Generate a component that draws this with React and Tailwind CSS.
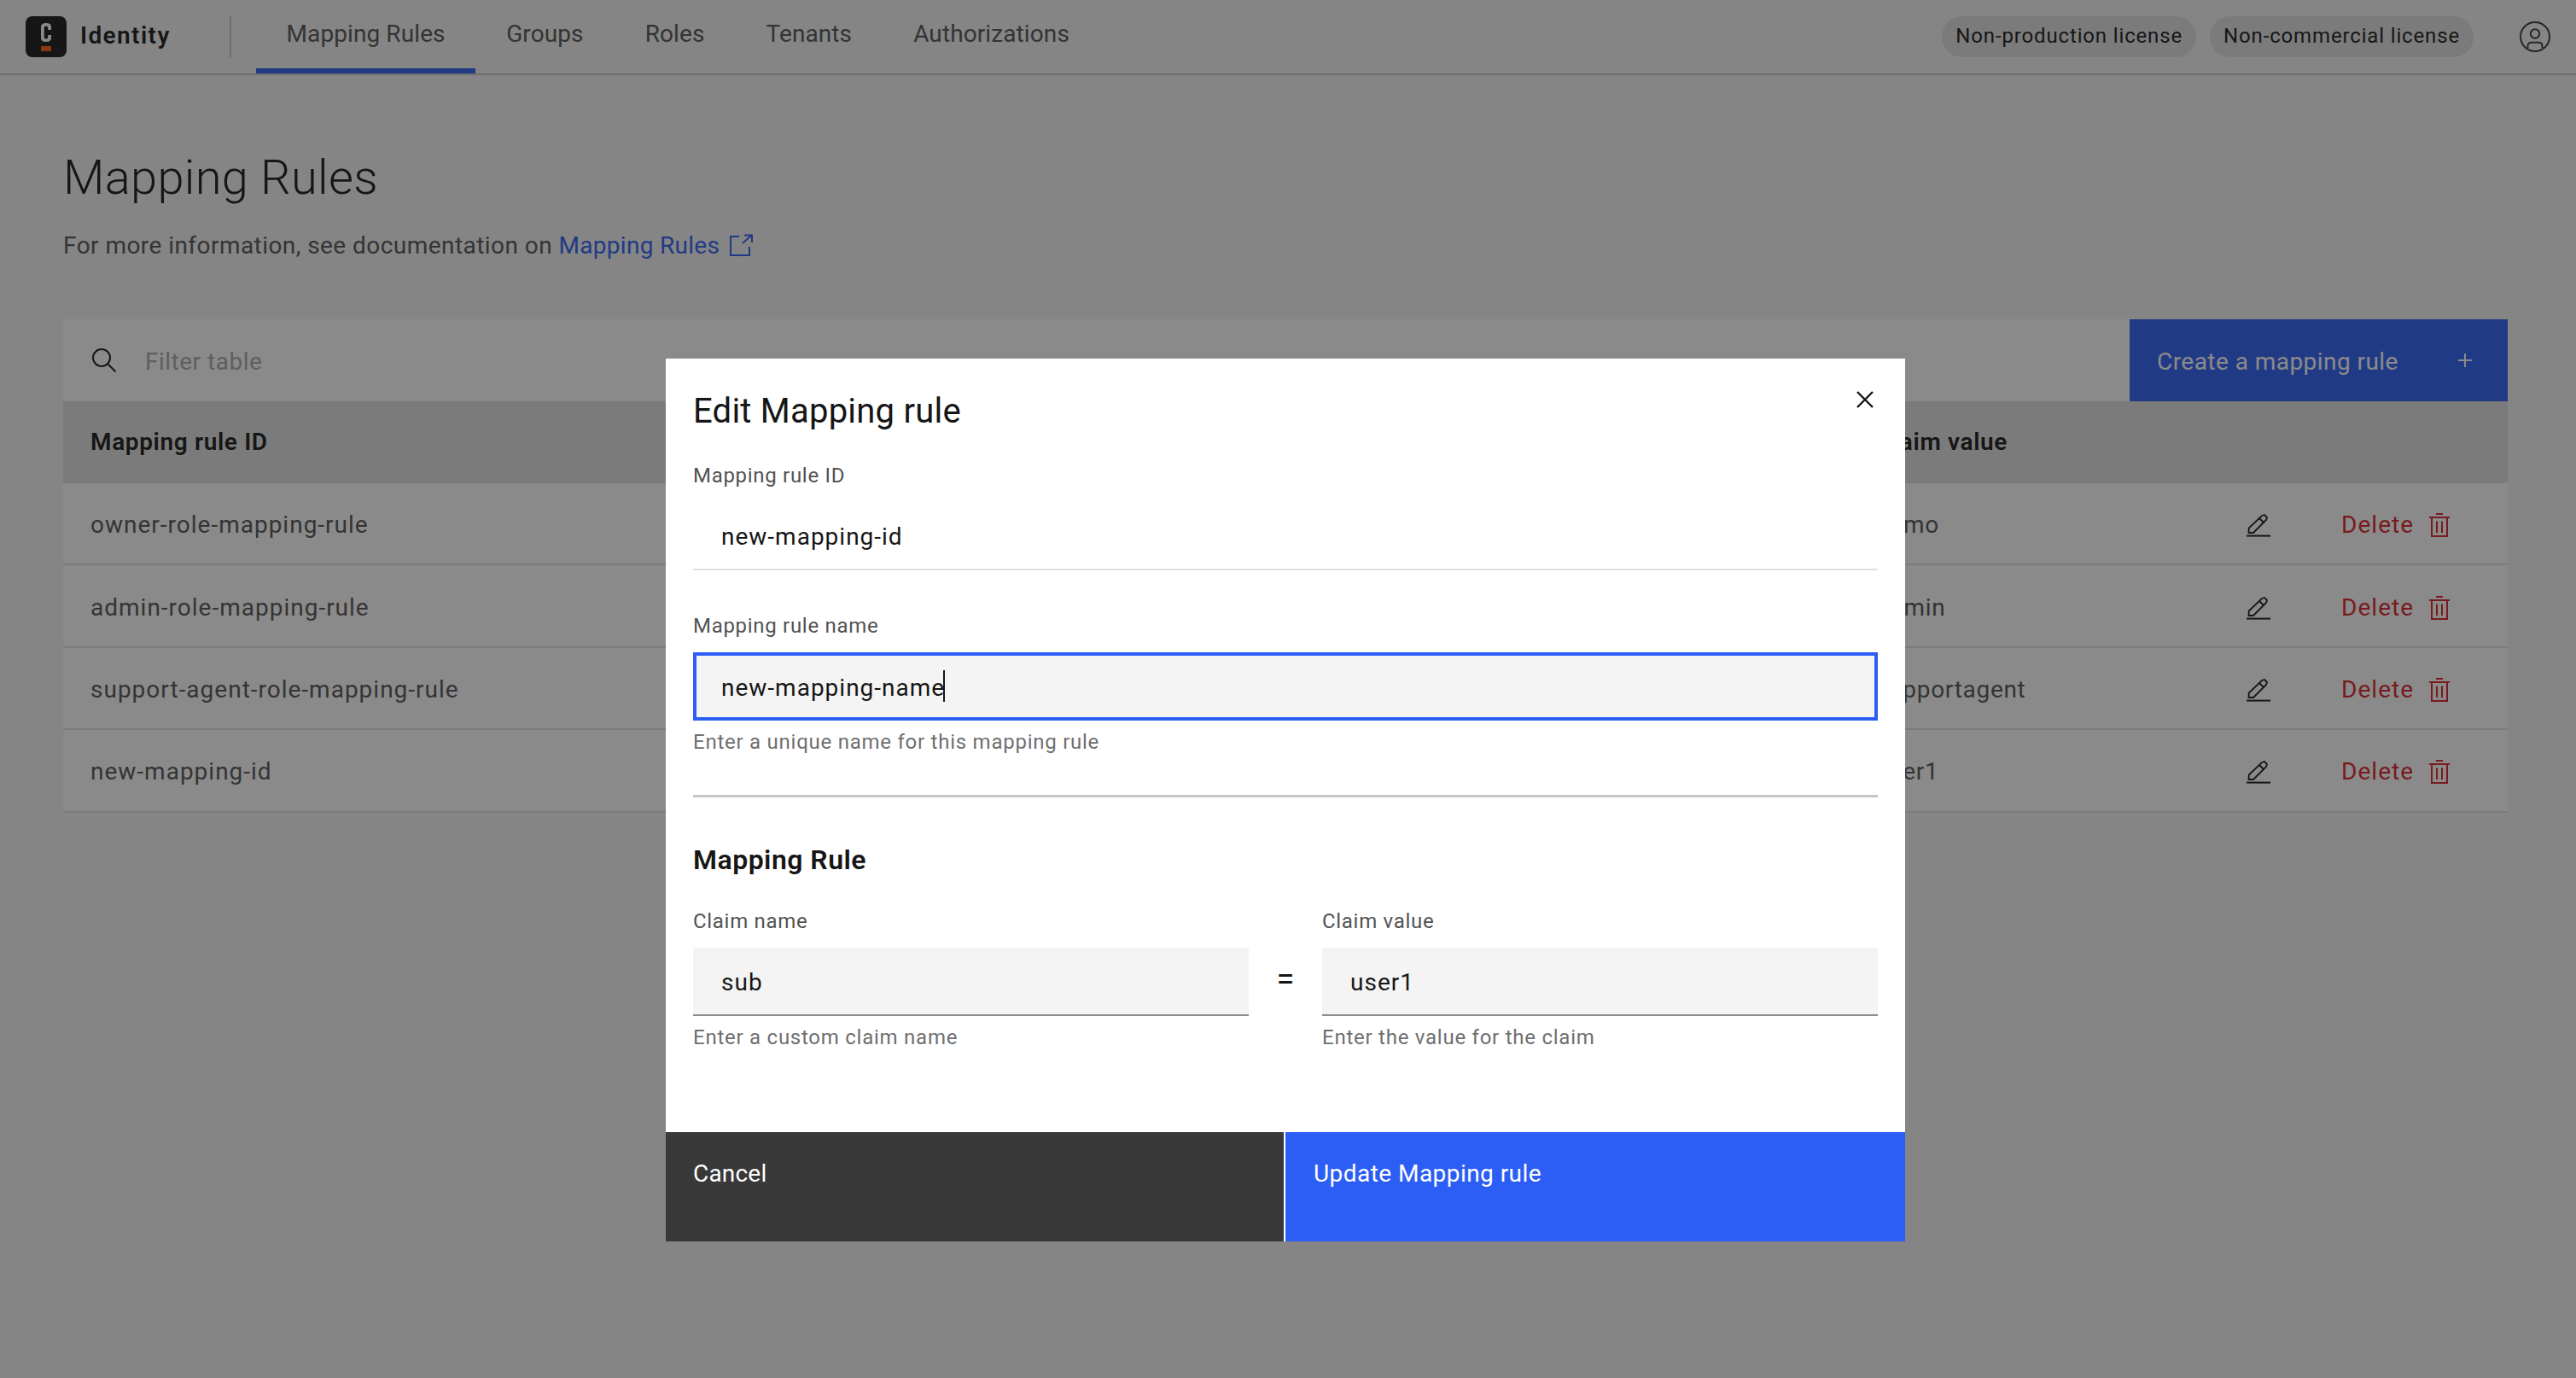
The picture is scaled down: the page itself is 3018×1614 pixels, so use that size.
import React from 'react';

const sans = "font-['Roboto','Noto_Sans',sans-serif]";

const rules = [
  { id: 'owner-role-mapping-rule', value: 'demo' },
  { id: 'admin-role-mapping-rule', value: 'admin' },
  { id: 'support-agent-role-mapping-rule', value: 'supportagent' },
  { id: 'new-mapping-id', value: 'user1' },
];

const tabs = ['Mapping Rules', 'Groups', 'Roles', 'Tenants', 'Authorizations'];

const Logo = () => (
  <svg width="48" height="48" viewBox="0 0 48 48" className="shrink-0">
    <rect width="48" height="48" rx="8" fill="#161616" />
    <path d="M18 24V12.5Q18 8 24 8T30 12.5V16H26.2V13Q26.2 11.4 24 11.4T21.8 13V25Q21.8 26.6 24 26.6T26.2 25V22H30V25.5Q30 30 24 30T18 25.5Z" fill="#ffffff" />
    <rect x="18" y="35" width="12" height="6" fill="#fc5d0d" />
  </svg>
);

const PencilIcon = () => (
  <svg width="28" height="28" viewBox="0 0 28 28" fill="none" stroke="#161616" strokeWidth="1.8">
    <path d="M0 26.6H28" strokeWidth="2" />
    <path d="M2.5 23L2.8 17.5L18 3L21 2L24 5L23 8L8 23Z" />
    <path d="M15 6L20 11" />
  </svg>
);

const TrashIcon = () => (
  <svg width="24" height="28" viewBox="0 0 24 28" fill="none" stroke="#da1e28" strokeWidth="2">
    <path d="M0 5H24M8 1H16" />
    <path d="M3 5V27H21V5" />
    <path d="M9 9.5V23M15 9.5V23" />
  </svg>
);

const Field = ({ label, value, helper, focused, plain, className = '' }) => (
  <div className={`flex flex-col ${className}`}>
    <label className="text-[24px] leading-[32px] tracking-[0.7px] text-[#525252]">{label}</label>
    <div
      className={`mt-[15px] flex h-[80px] items-center pt-[4px] text-[28px] tracking-[1px] text-[#161616] ${
        focused
          ? 'border-4 border-[#2c5ef5] bg-[#f4f4f4] px-[29px]'
          : plain
          ? 'border-b-2 border-[#e0e0e0] bg-white px-[33px]'
          : 'border-b-2 border-[#8d8d8d] bg-[#f4f4f4] px-[33px]'
      }`}
    >
      <span>{value}</span>
      {focused && <span className="-ml-[2px] h-[37px] w-[2px] -translate-y-[3px] bg-[#161616]" />}
    </div>
    {helper && <div className="mt-[9px] text-[24px] leading-[32px] tracking-[0.75px] text-[#6f6f6f]">{helper}</div>}
  </div>
);

export default function App() {
  return (
    <div className={`relative h-[1614px] w-[3018px] overflow-hidden bg-[#f4f4f4] ${sans}`}>
      {/* header */}
      <header className="flex h-[88px] items-start border-b-2 border-[#c6c6c6]">
        <div className="flex h-[86px] items-center pl-[30px]">
          <Logo />
          <span className="ml-[16px] w-[175px] pb-[3px] text-[28px] font-semibold tracking-[1.4px] text-[#161616]">Identity</span>
          <span className="h-[48px] w-[2px] bg-[#c6c6c6]" />
        </div>
        <nav className="ml-[29px] flex h-[86px]">
          {tabs.map((tab, i) => (
            <div
              key={tab}
              className={`flex h-full items-center text-[28px] tracking-[0.1px] text-[#525252] ${
                i === 0 ? 'border-b-[6px] border-[#2c5ef5] px-[35.5px]' : 'px-[36px] pb-[6px]'
              }`}
            >
              {tab}
            </div>
          ))}
        </nav>
        <div className="ml-auto flex h-[86px] items-center">
          <span className="flex h-[48px] items-center rounded-full bg-[#e0e0e0] px-[16px] pb-[3px] text-[24px] tracking-[0.85px] text-[#161616]">
            Non-production license
          </span>
          <span className="ml-[16px] flex h-[48px] items-center rounded-full bg-[#e0e0e0] px-[16px] pb-[3px] text-[24px] tracking-[0.85px] text-[#161616]">
            Non-commercial license
          </span>
          <svg width="36" height="36" viewBox="0 0 36 36" fill="none" stroke="#393939" strokeWidth="2" className="ml-[54px] mr-[30px]">
            <circle cx="18" cy="18" r="17" />
            <circle cx="18" cy="14.5" r="5.2" />
            <path d="M9.5 31V29Q9.5 24.7 14 24.7H22Q26.5 24.7 26.5 29V31" />
          </svg>
        </div>
      </header>

      {/* page */}
      <main className="pl-[74px] pr-[80px]">
        <h1 className="mt-[84px] text-[56px] leading-[72px] font-light tracking-[0.3px] text-[#161616]">Mapping Rules</h1>
        <p className="mt-[24px] flex h-[40px] items-center text-[28px] tracking-[0.45px] text-[#525252]">
          <span>For more information, see documentation on&nbsp;</span>
          <span className="tracking-[0.3px] text-[#2c5ef5]">Mapping Rules</span>
          <svg width="28" height="28" viewBox="0 0 28 28" fill="none" stroke="#2c5ef5" strokeWidth="2" className="ml-[11px]">
            <path d="M12 3H2V25H24V15" />
            <path d="M16 11L27 1M18 1.5H27V10" />
          </svg>
        </p>

        <div className="mt-[66px]">
          <div className="flex h-[96px] items-center bg-white">
            <svg width="28" height="28" viewBox="0 0 28 28" fill="none" stroke="#161616" strokeWidth="2" className="ml-[34px]">
              <circle cx="11" cy="11" r="10" />
              <path d="M18.5 18.5L27.5 27.5" />
            </svg>
            <span className="ml-[34px] pt-[3px] text-[28px] tracking-[0.5px] text-[#a8a8a8]">Filter table</span>
            <div className="ml-auto flex h-full w-[443px] items-center justify-between bg-[#2c5ef5] pl-[32px] pr-[42px] text-[28px] text-white">
              <span className="pt-[3px] tracking-[0.45px]">Create a mapping rule</span>
              <svg width="16" height="16" viewBox="0 0 16 16" stroke="#ffffff" strokeWidth="2">
                <path d="M8 0V16M0 8H16" />
              </svg>
            </div>
          </div>
          <div className="flex h-[96px] items-center bg-[#e0e0e0] text-[28px] font-semibold tracking-[0.64px] text-[#161616]">
            <div className="pl-[32px]">Mapping rule ID</div>
            <div className="absolute left-[2199px]">Claim value</div>
          </div>
          {rules.map((rule) => (
            <div key={rule.id} className="relative flex h-[96.4px] items-center border-b-2 border-[#e0e0e0] bg-white pt-[4px] text-[28px] tracking-[1px] text-[#525252]">
              <div className="pl-[32px]">{rule.id}</div>
              <div className="absolute left-[2124px] tracking-[0.7px]">{rule.value}</div>
              <div className="ml-auto flex items-center">
                <PencilIcon />
                <span className="ml-[83px] tracking-[1px] text-[#da1e28]">Delete</span>
                <span className="ml-[18px] mr-[68px]">
                  <TrashIcon />
                </span>
              </div>
            </div>
          ))}
        </div>
      </main>

      {/* modal overlay */}
      <div className="absolute inset-0 bg-[#161616]/50" />
      <div className="absolute left-[780px] top-[420px] flex h-[1034px] w-[1452px] flex-col bg-white">
        <svg width="20" height="20" viewBox="0 0 20 20" stroke="#161616" strokeWidth="2.4" className="absolute left-[1395px] top-[38px]">
          <path d="M1 1L19 19M19 1L1 19" />
        </svg>
        <div className="flex-1 px-[32px] pt-[34px]">
          <h2 className="text-[40px] leading-[56px] font-normal tracking-[0.23px] text-[#161616]">Edit Mapping rule</h2>
          <Field className="mt-[31px]" label="Mapping rule ID" value="new-mapping-id" plain />
          <Field
            className="mt-[49px]"
            label="Mapping rule name"
            value="new-mapping-name"
            helper="Enter a unique name for this mapping rule"
            focused
          />
          <div className="mt-[46px] h-[3px] bg-[#c6c6c6]" />
          <h3 className="mt-[51px] text-[32px] leading-[44px] font-semibold tracking-[0.48px] text-[#161616]">Mapping Rule</h3>
          <div className="mt-[34px] flex">
            <Field className="w-[651px]" label="Claim name" value="sub" helper="Enter a custom claim name" />
            <div className="mt-[47px] flex h-[80px] w-[86px] items-center justify-center pb-[6px] text-[38px] font-normal text-[#161616]">=</div>
            <Field className="w-[651px]" label="Claim value" value="user1" helper="Enter the value for the claim" />
          </div>
        </div>
        <div className="flex h-[128px] text-[28px] text-white">
          <div className="w-[724px] bg-[#393939] pl-[32px] pt-[28px] tracking-[0.2px]">Cancel</div>
          <div className="ml-[2px] flex-1 bg-[#2c5ef5] pl-[33px] pt-[28px] tracking-[0.45px]">Update Mapping rule</div>
        </div>
      </div>
    </div>
  );
}
